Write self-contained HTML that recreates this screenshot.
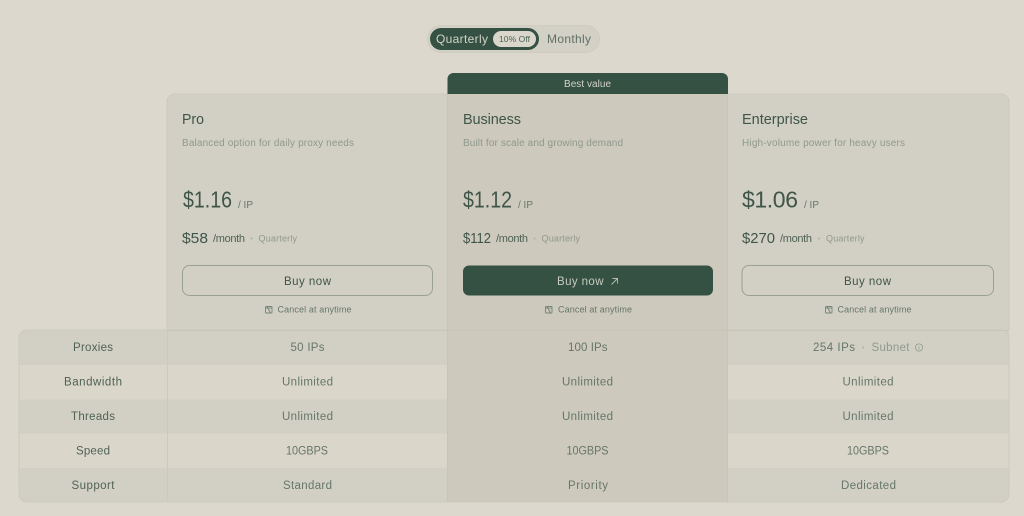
<!DOCTYPE html>
<html lang="en">
<head>
<meta charset="utf-8">
<title>Pricing</title>
<style>
html,body{margin:0;padding:0;background:#dcd8cd;width:1024px;height:516px;overflow:hidden}
svg{display:block;position:absolute;left:0;top:0}
text{font-family:"Liberation Sans",sans-serif;}
</style>
</head>
<body>
<svg width="1024" height="516" viewBox="0 0 1024 516" xmlns="http://www.w3.org/2000/svg">
<defs>
<g id="cal" fill="none" stroke="#76857a" stroke-width=".9">
<rect x=".5" y="1" width="6.5" height="6.5" rx=".6"/>
<path d="M.5 2.6H7M2 1 5.5 7.5"/>
</g>
</defs>
<rect width="1024" height="516" fill="#dcd8cd"/>

<!-- toggle -->
<rect x="427.5" y="25.5" width="172" height="27" rx="13.5" fill="#d3d0c5" stroke="#cfccc0"/>
<rect x="430" y="28" width="109" height="22" rx="11" fill="#355143"/>
<rect x="493" y="31" width="43" height="16" rx="8" fill="#dad6cb"/>
<text x="436" y="43" font-size="12" fill="#d3d3c8" textLength="52">Quarterly</text>
<text x="499" y="42" font-size="8.5" fill="#4d6356" textLength="31">10% Off</text>
<text x="547" y="43" font-size="12" fill="#5e7064" textLength="44">Monthly</text>

<!-- card + table backgrounds -->
<path d="M167 330V102a8 8 0 0 1 8-8H1001a8 8 0 0 1 8 8V330Z" fill="#d2d0c4"/>
<path d="M19 338a8 8 0 0 1 8-8H1009V494a8 8 0 0 1-8 8H27a8 8 0 0 1-8-8Z" fill="#d2d0c4"/>
<rect x="19" y="365" width="990" height="34.5" fill="#dad6ca"/>
<rect x="19" y="433.5" width="990" height="34.5" fill="#dad6ca"/>
<path d="M19 338a8 8 0 0 1 8-8H1001a8 8 0 0 1 8 8V494a8 8 0 0 1-8 8H27a8 8 0 0 1-8-8Z" fill="none" stroke="#cccabe"/>
<path d="M167 330V102a8 8 0 0 1 8-8H1001a8 8 0 0 1 8 8V330" fill="none" stroke="#cccabe"/>
<path d="M167.5 330V502" stroke="#cccabe"/>
<rect x="447.5" y="94" width="280.5" height="408" fill="#cdc9bc"/>
<path d="M447.5 94V502M727.5 94V502" stroke="#c8c5b8"/>
<path d="M167 330.5H1009" stroke="#c8c5b8"/>

<!-- best value tab -->
<path d="M447.5 94V79a6 6 0 0 1 6-6H722a6 6 0 0 1 6 6V94Z" fill="#355143"/>
<text x="564" y="87" font-size="10" fill="#d3d3c8" textLength="47">Best value</text>

<!-- Pro -->
<text x="182" y="124" font-size="14.5" fill="#3f5549" textLength="22" lengthAdjust="spacingAndGlyphs">Pro</text>
<text x="182" y="146" font-size="10" fill="#8f998d" textLength="172">Balanced option for daily proxy needs</text>
<text x="183" y="207.5" font-size="23" fill="#3f5549" textLength="49" lengthAdjust="spacingAndGlyphs">$1.16</text>
<text x="238" y="208" font-size="10" fill="#66766a" textLength="15">/ IP</text>
<text x="182" y="243" font-size="14.5" fill="#3f5549" textLength="26" lengthAdjust="spacingAndGlyphs">$58</text>
<text x="213" y="242" font-size="11" fill="#4f6256" textLength="32">/month</text>
<circle cx="251.5" cy="238.5" r="1.2" fill="#b5baac"/>
<text x="258.5" y="241.5" font-size="9" fill="#8f998d" textLength="38.5">Quarterly</text>
<rect x="182.5" y="265.5" width="250" height="30" rx="7" fill="none" stroke="#98a193"/>
<text x="284" y="285" font-size="11.5" fill="#3f5549" textLength="47">Buy now</text>
<use href="#cal" x="265" y="305.5"/>
<text x="277.5" y="312.5" font-size="9" fill="#66766a" textLength="74">Cancel at anytime</text>

<!-- Business -->
<text x="463" y="124" font-size="14.5" fill="#3f5549" textLength="58">Business</text>
<text x="463" y="146" font-size="10" fill="#8f998d" textLength="160">Built for scale and growing demand</text>
<text x="463" y="207.5" font-size="23" fill="#3f5549" textLength="49" lengthAdjust="spacingAndGlyphs">$1.12</text>
<text x="518" y="208" font-size="10" fill="#66766a" textLength="15">/ IP</text>
<text x="463" y="243" font-size="14.5" fill="#3f5549" textLength="28" lengthAdjust="spacingAndGlyphs">$112</text>
<text x="496" y="242" font-size="11" fill="#4f6256" textLength="32">/month</text>
<circle cx="534.5" cy="238.5" r="1.2" fill="#b5baac"/>
<text x="541.5" y="241.5" font-size="9" fill="#8f998d" textLength="38.5">Quarterly</text>
<rect x="463" y="265.5" width="250" height="30" rx="6" fill="#355143"/>
<text x="557" y="285" font-size="11.5" fill="#c9cbbf" textLength="46.5">Buy now</text>
<path d="M611.5 284.5 617.5 278.5M612.5 278.5H617.5V283.5" fill="none" stroke="#b9bdb0" stroke-width=".9"/>
<use href="#cal" x="545" y="305.5"/>
<text x="558" y="312.5" font-size="9" fill="#66766a" textLength="74">Cancel at anytime</text>

<!-- Enterprise -->
<text x="742" y="124" font-size="14.5" fill="#3f5549" textLength="66">Enterprise</text>
<text x="742" y="146" font-size="10" fill="#8f998d" textLength="163">High-volume power for heavy users</text>
<text x="742" y="207.5" font-size="23" fill="#3f5549" textLength="56">$1.06</text>
<text x="804" y="208" font-size="10" fill="#66766a" textLength="15">/ IP</text>
<text x="742" y="243" font-size="14.5" fill="#3f5549" textLength="33" lengthAdjust="spacingAndGlyphs">$270</text>
<text x="780" y="242" font-size="11" fill="#4f6256" textLength="32">/month</text>
<circle cx="819" cy="238.5" r="1.2" fill="#b5baac"/>
<text x="826" y="241.5" font-size="9" fill="#8f998d" textLength="38.5">Quarterly</text>
<rect x="742" y="265.5" width="251.5" height="30" rx="7" fill="none" stroke="#98a193"/>
<text x="844" y="285" font-size="11.5" fill="#3f5549" textLength="47">Buy now</text>
<use href="#cal" x="825" y="305.5"/>
<text x="837.5" y="312.5" font-size="9" fill="#66766a" textLength="74">Cancel at anytime</text>

<!-- row labels -->
<g font-size="11.5" fill="#4f6256">
<text x="73" y="351" textLength="40">Proxies</text>
<text x="64" y="385.5" textLength="58">Bandwidth</text>
<text x="71" y="420" textLength="44">Threads</text>
<text x="76" y="454.5" textLength="34">Speed</text>
<text x="71.5" y="489" textLength="43">Support</text>
</g>

<!-- values -->
<g font-size="11.5" fill="#66766a">
<text x="290.5" y="351" textLength="34">50 IPs</text>
<text x="282" y="385.5" textLength="51">Unlimited</text>
<text x="282" y="420" textLength="51">Unlimited</text>
<text x="286" y="454.5" textLength="42" lengthAdjust="spacingAndGlyphs">10GBPS</text>
<text x="283" y="489" textLength="49">Standard</text>

<text x="568" y="351" textLength="39.5">100 IPs</text>
<text x="562" y="385.5" textLength="51">Unlimited</text>
<text x="562" y="420" textLength="51">Unlimited</text>
<text x="566.5" y="454.5" textLength="42" lengthAdjust="spacingAndGlyphs">10GBPS</text>
<text x="568" y="489" textLength="40">Priority</text>

<text x="813" y="351" textLength="42">254 IPs</text>
<text x="871.5" y="351" textLength="38" fill="#8f998d">Subnet</text>
<text x="842.5" y="385.5" textLength="51">Unlimited</text>
<text x="842.5" y="420" textLength="51">Unlimited</text>
<text x="847" y="454.5" textLength="42" lengthAdjust="spacingAndGlyphs">10GBPS</text>
<text x="841" y="489" textLength="55">Dedicated</text>
</g>
<circle cx="863" cy="347.5" r="1.2" fill="#b5baac"/>
<circle cx="919" cy="347.5" r="3.6" fill="none" stroke="#8f998d" stroke-width=".8"/>
<path d="M919 345.6V346.2M919 347V349.4" stroke="#8f998d" stroke-width=".8"/>
</svg>
</body>
</html>
